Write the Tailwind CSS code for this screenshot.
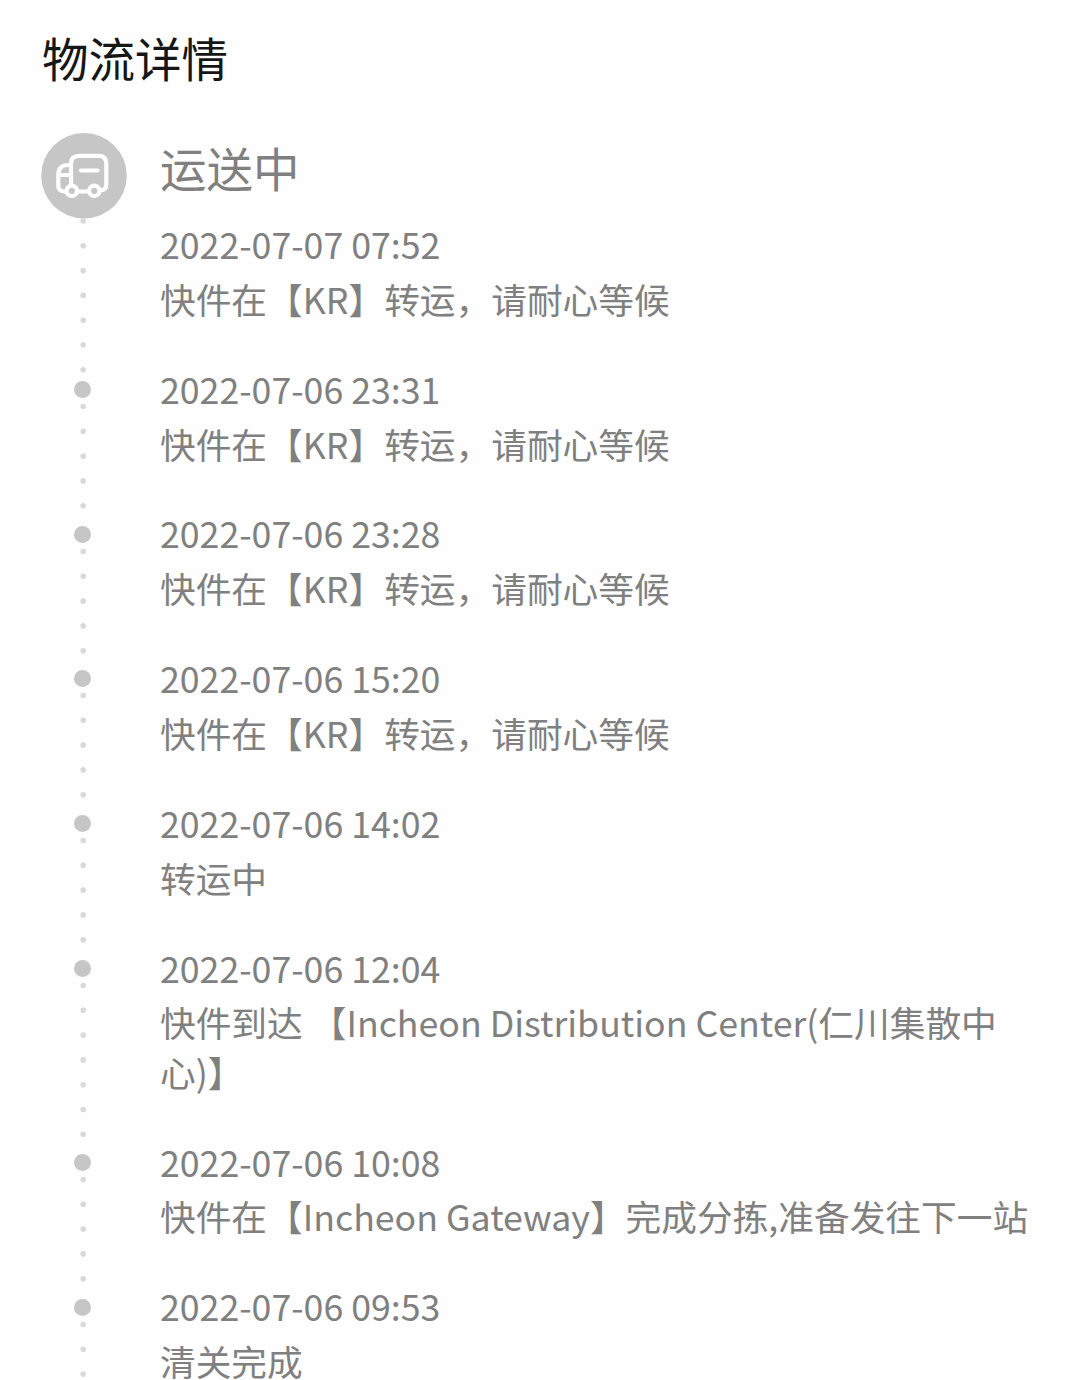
<!DOCTYPE html>
<html lang="zh-CN">

<head>
    <meta charset="UTF-8">
    <meta name="viewport" content="width=device-width, initial-scale=1.0">
    <title>物流详情</title>
    <script src="https://cdn.jsdelivr.net/npm/@tailwindcss/browser@4"></script>
</head>

<body class="bg-[#fefefe] font-['Noto_Sans_CJK_SC',sans-serif] text-[#808080]">
    <main class="h-[1380px] overflow-hidden pl-[41px] pt-[24px]">
        <h1 class="h-[109px] pl-px text-[46.5px] leading-[66px] text-[#161616]">物流详情</h1>

        <div class="flex h-[86px]">
            <div class="w-[119px] shrink-0">
                <svg class="size-[86px] overflow-visible" viewBox="0 0 86 86" fill="none" stroke="#fff" stroke-width="4.2" stroke-linecap="round" stroke-linejoin="round">
                    <circle cx="43" cy="42.700" r="42.800" fill="#c6c6c6" stroke="none" />
                    <path d="M25 58.500H23Q17.300 58 17.300 53V42Q17.300 32 27 32H29.500M17.500 42H29.500" />
                    <path d="M36 58.500H48M30 53V30.500Q30 22.800 38 22.800H57.500Q65.300 22.800 65.300 30.500V51.500Q65.300 57 59.500 57.500" />
                    <path d="M40 37.500H56.500" />
                    <circle cx="30.800" cy="57.800" r="5.200" />
                    <circle cx="53.300" cy="57.800" r="5.200" />
                </svg>
            </div>
            <h2 class="text-[46.5px] leading-[68px]">运送中</h2>
        </div>

        <ul id="registros" class="text-[35.7px] leading-[49.4px]"></ul>
    </main>

    <script>
        const registros = [
            ['2022-07-07 07:52', '快件在【KR】转运，请耐心等候'],
            ['2022-07-06 23:31', '快件在【KR】转运，请耐心等候'],
            ['2022-07-06 23:28', '快件在【KR】转运，请耐心等候'],
            ['2022-07-06 15:20', '快件在【KR】转运，请耐心等候'],
            ['2022-07-06 14:02', '转运中'],
            ['2022-07-06 12:04', '快件到达 【Incheon Distribution Center(仁川集散中心)】', 7],
            ['2022-07-06 10:08', '快件在【Incheon Gateway】完成分拣,准备发往下一站'],
            ['2022-07-06 09:53', '清关完成'],
        ];
        const paso = 24.8;

        // el primer registro no lleva punto grande, su linea sale del icono
        document.getElementById('registros').innerHTML = registros.map(([fecha, texto, puntos = 5], i) => `
            <li class="flex">
                <div class="flex w-[83px] shrink-0 flex-col items-center ${i ? 'pt-[17.2px]' : 'pt-[2px]'}">
                    ${i ? '<span class="size-[17px] shrink-0 rounded-full bg-[#c6c6c6]"></span>' : ''}
                    <svg class="h-px w-[6px] shrink-0 overflow-visible" stroke="#d9d9d9" stroke-width="5.6" stroke-linecap="round">
                        <line x1="3.200" x2="3.200" y1="${i ? 8.5 : 0}" y2="${i ? 8.6 + paso * (puntos - 1) : 0.1 + paso * 6}" stroke-dasharray="0 ${paso}" />
                    </svg>
                </div>
                <div class="w-[906px] pb-[40.5px] pl-[36px]">
                    <p>${fecha}</p>
                    <p class="mt-[5.4px]">${texto}</p>
                </div>
            </li>
        `).join('');
    </script>
</body>

</html>
